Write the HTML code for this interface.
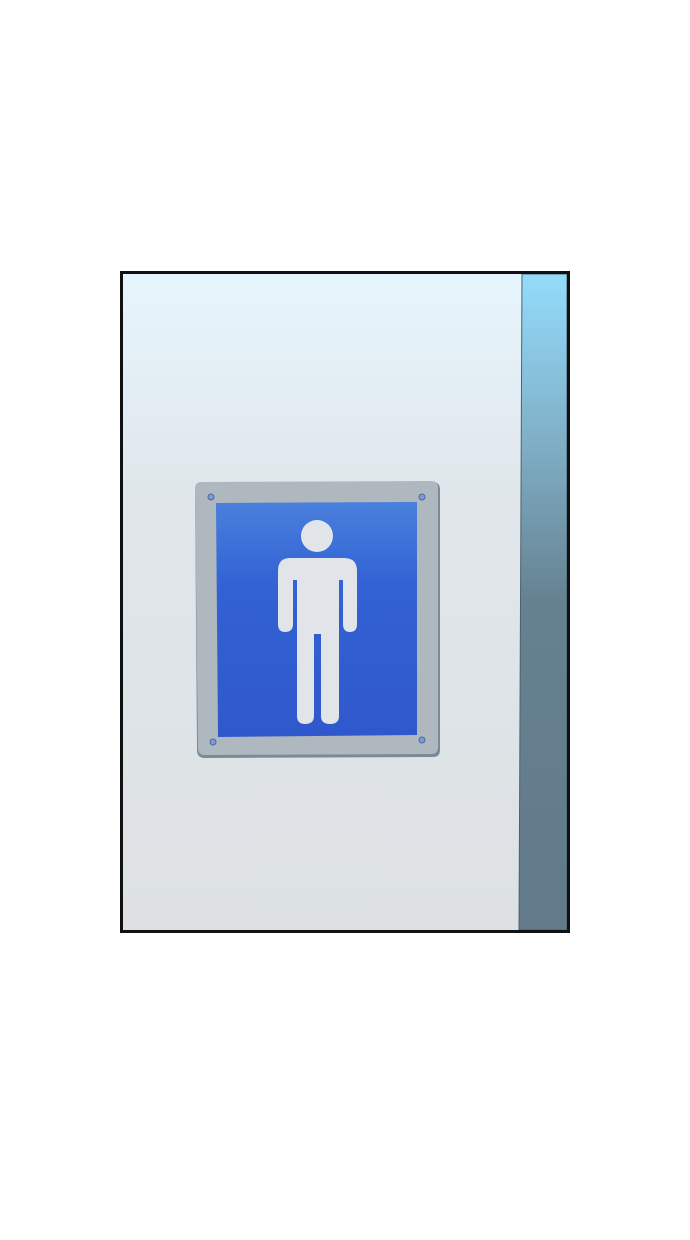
<!DOCTYPE html>
<html><head><style>
body{margin:0;width:690px;height:1240px;background:#fff;position:relative;overflow:hidden}
.panel{position:absolute;left:120px;top:271px;width:444px;height:656px;border:3px solid #111;background:linear-gradient(#e6f5fd 0%,#e0e6ea 35%,#dde1e4 100%);overflow:hidden}
</style></head><body>
<div class="panel"><svg width="444" height="656" style="position:absolute;left:0;top:0"><defs><linearGradient id="s" x1="0" y1="0" x2="0" y2="1"><stop offset="0" stop-color="#93dcfb"/><stop offset="0.25" stop-color="#80b0c8"/><stop offset="0.5" stop-color="#658190"/><stop offset="1" stop-color="#627a89"/></linearGradient></defs><path d="M399 0 L444 0 L444 656 L396 656Z" fill="url(#s)" stroke="#4a6270" stroke-width="1"/></svg></div>
<svg style="position:absolute;left:0;top:0" width="690" height="1240">
<path d="M202 483 L433 482 Q440 482 440 490 L440 750 Q440 757 433 757 L205 758 Q197 758 197 750 L195 490 Q195 483 202 483Z" fill="#7a8a96"/>
<path d="M201 482 L431 481 Q438 481 438 488 L438 747 Q438 754 431 754 L205 755 Q198 755 198 748 L195 489 Q195 482 201 482Z" fill="#b0b8bf"/>
<defs><linearGradient id="g" x1="0" y1="0" x2="0" y2="1"><stop offset="0" stop-color="#4a80dd"/><stop offset="0.35" stop-color="#3262d4"/><stop offset="1" stop-color="#2f58cc"/></linearGradient></defs>
<path d="M216 503 L417 502 L417 735 L218 737Z" fill="url(#g)"/>
<circle cx="317" cy="536" r="16" fill="#e1e5ea"/>
<path d="M290 558 L344 558 Q357 558 357 571 L357 624 Q357 632 350 632 Q343 632 343 624 L343 580 L339 580 L339 716 Q339 724 330 724 Q321 724 321 716 L321 634 L314 634 L314 716 Q314 724 305 724 Q297 724 297 716 L297 580 L293 580 L293 624 Q293 632 285 632 Q278 632 278 624 L278 571 Q278 558 290 558Z" fill="#e1e5ea"/>
<g fill="#7a9bd0" stroke="#4a6aa0"><circle cx="211" cy="497" r="3"/><circle cx="422" cy="497" r="3"/><circle cx="213" cy="742" r="3"/><circle cx="422" cy="740" r="3"/></g>
</svg>
</body></html>
